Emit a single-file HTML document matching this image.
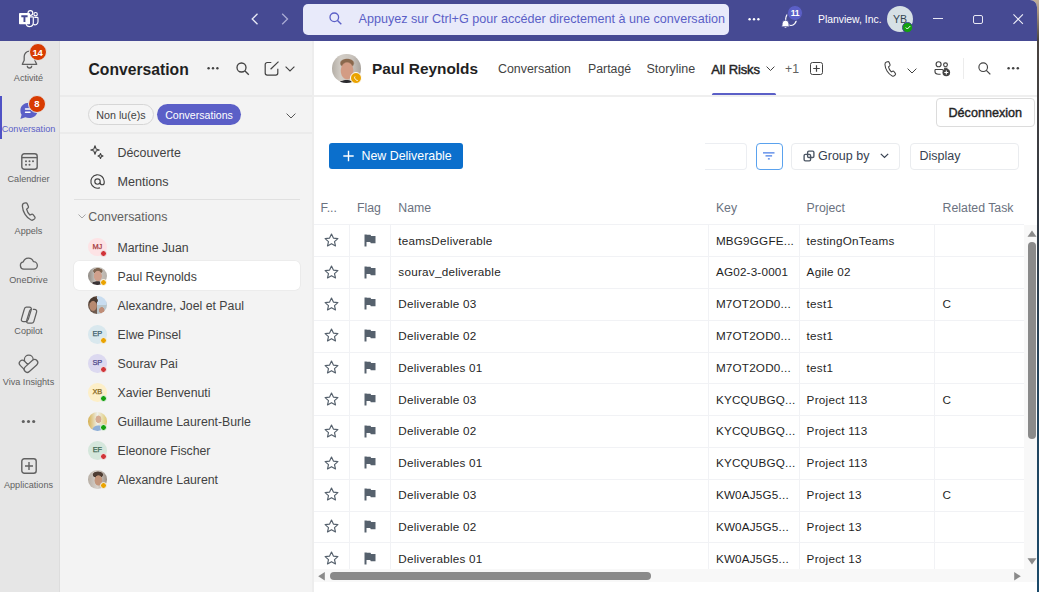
<!DOCTYPE html>
<html><head><meta charset="utf-8">
<style>
*{box-sizing:border-box;margin:0;padding:0}
html,body{width:1039px;height:592px;overflow:hidden;background:linear-gradient(#c0ae98 0,#a89480 12px,#4a4440 40px,#353a42 200px,#24445c 380px,#1b4a6a 592px);font-family:"Liberation Sans",sans-serif}
#app{position:absolute;left:0;top:0;width:1037px;height:592px;background:#fff;overflow:hidden;border-top-right-radius:7px}
.t{position:absolute;white-space:nowrap}
.b{position:absolute}
svg{position:absolute;overflow:visible}
</style></head><body>
<div id="app">

<div class="b" style="left:0;top:0;width:1037px;height:41px;background:#464a93"></div>
<div class="b" style="left:0;top:41px;width:59px;height:551px;background:#e6e6e6"></div>
<div class="b" style="left:58.5px;top:41px;width:1.2px;height:551px;background:#dddddd"></div>
<div class="b" style="left:59.7px;top:41px;width:254px;height:551px;background:#f3f3f3"></div>
<div class="b" style="left:312px;top:41px;width:2px;height:551px;background:#ededed"></div>
<svg style="left:18px;top:10px" width="22" height="18" viewBox="0 0 22 18">
<circle cx="17.6" cy="4.2" r="1.7" fill="none" stroke="#fff" stroke-width="1.1"/>
<path d="M16.3 7.4h2.9a.8.8 0 0 1 .8.8v3.6a3 3 0 0 1-4.6 2.5" fill="none" stroke="#fff" stroke-width="1.15"/>
<circle cx="12.4" cy="3" r="2.4" fill="none" stroke="#fff" stroke-width="1.15"/>
<path d="M10.5 6.9h4.2a.6.6 0 0 1 .6.6v5.4a3.7 3.7 0 0 1-7.2 1.2" fill="none" stroke="#fff" stroke-width="1.15"/>
<rect x="1" y="3.1" width="11" height="11.2" rx="0.8" fill="#fff"/>
<path d="M3.3 6.3h6.3M6.45 6.3v5.8" stroke="#464a93" stroke-width="1.9"/>
</svg>
<svg style="left:251px;top:13px" width="8" height="12" viewBox="0 0 8 12"><path d="M6.5 0.8L1.2 6l5.3 5.2" fill="none" stroke="#e8e9f5" stroke-width="1.3"/></svg>
<svg style="left:281px;top:13px" width="8" height="12" viewBox="0 0 8 12"><path d="M1.2 0.8L6.5 6l-5.3 5.2" fill="none" stroke="#a9abd4" stroke-width="1.3"/></svg>
<div class="b" style="left:303px;top:4px;width:426px;height:30.5px;background:#e8eafa;border-radius:5px"></div>
<svg style="left:329px;top:12px" width="13" height="13" viewBox="0 0 13 13"><circle cx="5.3" cy="5.3" r="4.3" fill="none" stroke="#5b5fc7" stroke-width="1.3"/><path d="M8.5 8.5l3.8 3.8" stroke="#5b5fc7" stroke-width="1.4"/></svg>
<div class="t" style="left:358.5px;top:11.30px;font-size:12.6px;line-height:16px;color:#5b5fc7;font-weight:400;letter-spacing:0px;">Appuyez sur Ctrl+G pour accéder directement à une conversation</div>
<svg style="left:747.5px;top:16.6px" width="14" height="4" viewBox="0 0 14 4"><circle cx="1.6" cy="2.2" r="1.2" fill="#fff"/><circle cx="6" cy="2.2" r="1.2" fill="#fff"/><circle cx="10.4" cy="2.2" r="1.2" fill="#fff"/></svg>
<svg style="left:780px;top:10px" width="18" height="18" viewBox="0 0 18 18">
<ellipse cx="11" cy="9.2" rx="5.4" ry="6.3" fill="none" stroke="#fff" stroke-width="1.2"/>
<path d="M1 16.8c.9-.6 1.2-1.6 1.2-3.3a3.3 3.3 0 0 1 6.6 0c0 1.7.3 2.7 1.2 3.3z" fill="#fff" stroke="#464a93" stroke-width="0.8"/>
<path d="M4.3 17.3a1.3 1.3 0 0 0 2.4 0" fill="#fff"/>
</svg>
<div class="b" style="left:787.2px;top:5.4px;width:15.6px;height:15.6px;border-radius:50%;background:#5b5fc7;border:1px solid #464a93"></div>
<div class="t" style="left:787.2px;top:7.90px;font-size:8.6px;line-height:11px;color:#fff;font-weight:700;letter-spacing:-0.3px;width:15.6px;text-align:center">11</div>
<div class="t" style="left:818px;top:12.80px;font-size:10.4px;line-height:14px;color:#fff;font-weight:400;letter-spacing:0px;">Planview, Inc.</div>
<div class="b" style="left:887px;top:6.3px;width:26px;height:26px;border-radius:50%;background:#d6e0e5"></div>
<div class="t" style="left:887px;top:12.00px;font-size:10.6px;line-height:14px;color:#33454f;font-weight:400;letter-spacing:0px;width:26px;text-align:center">YB</div>
<div class="b" style="left:902.2px;top:21.8px;width:10.8px;height:10.8px;border-radius:50%;background:#13a10e;border:1.3px solid #464a93"></div>
<svg style="left:904.8px;top:24.8px" width="6" height="5" viewBox="0 0 6 5"><path d="M0.8 2.5l1.5 1.5 3-3" fill="none" stroke="#fff" stroke-width="1"/></svg>
<div class="b" style="left:933px;top:18.2px;width:9.8px;height:1.2px;background:#e8e8f4"></div>
<div class="b" style="left:973px;top:14.7px;width:9.6px;height:9.4px;border:1.2px solid #e8e8f4;border-radius:2px"></div>
<svg style="left:1012.8px;top:14.3px" width="10.4" height="10.4" viewBox="0 0 11 11"><path d="M0.5 0.5l10 10M10.5 0.5l-10 10" stroke="#eeeef8" stroke-width="1.15"/></svg>
<div class="b" style="left:0;top:95.5px;width:2px;height:43.2px;background:#4f52c5"></div>
<svg style="left:21px;top:50px" width="17" height="19" viewBox="0 0 17 19">
<path d="M8.5 1.2a5.3 5.3 0 0 0-5.3 5.3v3.8L1.3 14.3h14.4l-1.9-4V6.5A5.3 5.3 0 0 0 8.5 1.2z" fill="none" stroke="#616161" stroke-width="1.3" stroke-linejoin="round"/>
<path d="M6.3 15.8a2.2 2.2 0 0 0 4.4 0" fill="none" stroke="#616161" stroke-width="1.3"/>
</svg>
<div class="b" style="left:29.1px;top:43.4px;width:18px;height:18px;border-radius:50%;background:#d83b01;border:1px solid #e6e6e6"></div>
<div class="t" style="left:29.1px;top:46.60px;font-size:9.5px;line-height:12px;color:#fff;font-weight:700;letter-spacing:-0.2px;width:17px;text-align:center">14</div>
<div class="t" style="left:0px;top:71.60px;font-size:9.1px;line-height:12px;color:#616161;font-weight:400;letter-spacing:0px;width:57px;text-align:center">Activité</div>
<svg style="left:19px;top:102px" width="20" height="18" viewBox="0 0 20 18">
<path d="M10 0.8c5 0 8.6 3.3 8.6 7.6S15 16 10 16c-1.3 0-2.6-.2-3.7-.7L1.4 17l1.2-4.3A7.3 7.3 0 0 1 1.4 8.4C1.4 4.1 5 0.8 10 0.8z" fill="#5b5fc7"/>
<path d="M6.5 7h7M6.5 10.2h4.5" stroke="#fff" stroke-width="1.4" stroke-linecap="round"/>
</svg>
<div class="b" style="left:28.3px;top:95px;width:18px;height:18px;border-radius:50%;background:#d83b01;border:1px solid #e6e6e6"></div>
<div class="t" style="left:28.3px;top:98.20px;font-size:9.5px;line-height:12px;color:#fff;font-weight:700;letter-spacing:0px;width:17px;text-align:center">8</div>
<div class="t" style="left:0px;top:123.10px;font-size:9.1px;line-height:12px;color:#5b5fc7;font-weight:400;letter-spacing:0px;width:57px;text-align:center">Conversation</div>
<svg style="left:20.5px;top:152.5px" width="17" height="17" viewBox="0 0 17 17">
<rect x="0.8" y="0.8" width="15.4" height="15.4" rx="2.5" fill="none" stroke="#616161" stroke-width="1.4"/>
<path d="M0.8 4.6h15.4" stroke="#616161" stroke-width="1.4"/>
<g fill="#616161"><circle cx="5" cy="8.3" r="1"/><circle cx="8.5" cy="8.3" r="1"/><circle cx="12" cy="8.3" r="1"/><circle cx="5" cy="11.8" r="1"/><circle cx="8.5" cy="11.8" r="1"/></g>
</svg>
<div class="t" style="left:0px;top:173.30px;font-size:9.1px;line-height:12px;color:#616161;font-weight:400;letter-spacing:0px;width:57px;text-align:center">Calendrier</div>
<svg style="left:20.8px;top:202px" width="15" height="18" viewBox="0 0 15 18">
<path d="M3.2 1.2l1.6-.3c.6-.1 1.1.2 1.4.8l1.2 2.7c.2.6.1 1.2-.4 1.6L5.6 7.2c.5 2.3 1.6 4.2 3.3 5.8l1.6-.7c.6-.2 1.2-.1 1.6.4l1.7 2.2c.4.5.3 1.2-.1 1.7l-1 1c-.7.6-1.7.8-2.6.4C5.3 15.7 1.7 9.8 1.4 4.3c-.1-1.4.6-2.8 1.8-3.1z" fill="none" stroke="#616161" stroke-width="1.3"/>
</svg>
<div class="t" style="left:0px;top:224.50px;font-size:9.1px;line-height:12px;color:#616161;font-weight:400;letter-spacing:0px;width:57px;text-align:center">Appels</div>
<svg style="left:19px;top:256.5px" width="19" height="13" viewBox="0 0 19 13">
<path d="M4.8 12.2A3.7 3.7 0 0 1 4.3 4.9 5.3 5.3 0 0 1 14.4 4.6a3.8 3.8 0 0 1 .3 7.6z" fill="none" stroke="#616161" stroke-width="1.3" stroke-linejoin="round"/>
</svg>
<div class="t" style="left:0px;top:273.80px;font-size:9.1px;line-height:12px;color:#616161;font-weight:400;letter-spacing:0px;width:57px;text-align:center">OneDrive</div>
<svg style="left:19.5px;top:305.5px" width="18" height="17" viewBox="0 0 18 17">
<path d="M6.2 1.2h3.3c1.3 0 2.2 1.2 1.8 2.4l-3 9.8c-.4 1.3-1.6 2.3-3 2.3H3.4c-1.4 0-2.4-1.3-2-2.6l2.8-9.6c.3-1.3 1-2.3 2-2.3z" fill="none" stroke="#616161" stroke-width="1.25"/>
<path d="M12.8 3.4h1.8c1.4 0 2.4 1.3 2 2.6l-2.8 9.6c-.3 1-1.1 1.6-2.1 1.6H8.4c-1.3 0-2.2-1.2-1.8-2.4l3-9.8c.4-1.3 1-1.6 2-1.6" fill="none" stroke="#616161" stroke-width="1.25"/>
</svg>
<div class="t" style="left:0px;top:324.70px;font-size:9.1px;line-height:12px;color:#616161;font-weight:400;letter-spacing:0px;width:57px;text-align:center">Copilot</div>
<svg style="left:19px;top:355.4px" width="19" height="19" viewBox="0 0 19 19">
<circle cx="9.8" cy="4.6" r="4.4" fill="#e6e6e6" stroke="#616161" stroke-width="1.25"/>
<rect x="-0.675" y="7.65" width="12.65" height="6" rx="3" fill="#e6e6e6" stroke="#616161" stroke-width="1.25" transform="rotate(45 5.65 10.65)"/>
<rect x="3.93" y="7.8" width="16.04" height="6.2" rx="3.1" fill="#e6e6e6" stroke="#616161" stroke-width="1.25" transform="rotate(-42 11.95 10.9)"/>
</svg>
<div class="t" style="left:0px;top:375.50px;font-size:9.1px;line-height:12px;color:#616161;font-weight:400;letter-spacing:0px;width:57px;text-align:center">Viva Insights</div>
<svg style="left:21px;top:419px" width="16" height="5" viewBox="0 0 16 5"><circle cx="2.3" cy="2.5" r="1.55" fill="#616161"/><circle cx="7.5" cy="2.5" r="1.55" fill="#616161"/><circle cx="12.7" cy="2.5" r="1.55" fill="#616161"/></svg>
<svg style="left:20.5px;top:457.5px" width="16" height="16" viewBox="0 0 16 16">
<rect x="0.8" y="0.8" width="14.4" height="14.4" rx="2.5" fill="none" stroke="#616161" stroke-width="1.4"/>
<path d="M8 4v8M4 8h8" stroke="#616161" stroke-width="1.4"/>
</svg>
<div class="t" style="left:0px;top:478.80px;font-size:9.1px;line-height:12px;color:#616161;font-weight:400;letter-spacing:0px;width:57px;text-align:center">Applications</div>
<div class="t" style="left:88.5px;top:59.60px;font-size:15.7px;line-height:20px;color:#1f1f1f;font-weight:700;letter-spacing:0px;">Conversation</div>
<svg style="left:207px;top:66px" width="14" height="4" viewBox="0 0 14 4"><circle cx="1.6" cy="2.2" r="1.2" fill="#424242"/><circle cx="6" cy="2.2" r="1.2" fill="#424242"/><circle cx="10.4" cy="2.2" r="1.2" fill="#424242"/></svg>
<svg style="left:236px;top:62px" width="14" height="13" viewBox="0 0 14 13"><circle cx="5.5" cy="5.5" r="4.5" fill="none" stroke="#424242" stroke-width="1.3"/><path d="M8.8 8.8l4 4" stroke="#424242" stroke-width="1.3"/></svg>
<svg style="left:263.5px;top:60.5px" width="15" height="15" viewBox="0 0 15 15"><path d="M7.3 1.5H3.2a2 2 0 0 0-2 2v8.6a2 2 0 0 0 2 2h8.6a2 2 0 0 0 2-2V7.8" fill="none" stroke="#424242" stroke-width="1.2"/><path d="M6.6 8.3L14.5 0.6" stroke="#424242" stroke-width="1.2"/></svg>
<svg style="left:285px;top:66px" width="10" height="6" viewBox="0 0 10 6"><path d="M0.6 0.6L5 5l4.4-4.4" fill="none" stroke="#424242" stroke-width="1.1"/></svg>
<div class="b" style="left:59.7px;top:95px;width:252.3px;height:2px;background:#ebebeb"></div>
<div class="b" style="left:88px;top:103.7px;width:66px;height:21.5px;border-radius:11px;border:1px solid #d6d6d6;background:#f5f5f5"></div>
<div class="t" style="left:88px;top:107.80px;font-size:10.7px;line-height:14px;color:#424242;font-weight:400;letter-spacing:0px;width:66px;text-align:center">Non lu(e)s</div>
<div class="b" style="left:157px;top:103.7px;width:84px;height:21.5px;border-radius:11px;background:#5b5fc7"></div>
<div class="t" style="left:157px;top:107.80px;font-size:10.6px;line-height:14px;color:#fff;font-weight:400;letter-spacing:0px;width:84px;text-align:center">Conversations</div>
<svg style="left:285.5px;top:112.8px" width="10" height="6" viewBox="0 0 10 6"><path d="M0.6 0.6L5 5l4.4-4.4" fill="none" stroke="#555" stroke-width="1"/></svg>
<div class="b" style="left:59.7px;top:132px;width:252.3px;height:2px;background:#ebebeb"></div>
<svg style="left:90px;top:145px" width="14" height="14" viewBox="0 0 14 14">
<path d="M5 0.8l1.1 3.1 3.1 1.1-3.1 1.1L5 9.2 3.9 6.1 0.8 5l3.1-1.1z" fill="none" stroke="#424242" stroke-width="1.1" stroke-linejoin="round"/>
<path d="M10.5 8.5l.8 1.7 1.7.8-1.7.8-.8 1.7-.8-1.7-1.7-.8 1.7-.8z" fill="none" stroke="#424242" stroke-width="1.1" stroke-linejoin="round"/>
</svg>
<div class="t" style="left:117.5px;top:145.30px;font-size:12.4px;line-height:16px;color:#424242;font-weight:400;letter-spacing:0px;">Découverte</div>
<svg style="left:89.5px;top:174px" width="15" height="15" viewBox="0 0 15 15">
<path d="M10.2 7.5a2.7 2.7 0 1 1-5.4 0 2.7 2.7 0 0 1 5.4 0zm0 0v1.2a2 2 0 0 0 4 0V7.5A6.7 6.7 0 1 0 10 13.7" fill="none" stroke="#424242" stroke-width="1.15"/>
</svg>
<div class="t" style="left:117.5px;top:174.00px;font-size:12.6px;line-height:16px;color:#424242;font-weight:400;letter-spacing:0px;">Mentions</div>
<div class="b" style="left:74px;top:198.5px;width:226px;height:1px;background:#e0e0e0"></div>
<svg style="left:77.5px;top:214px" width="8" height="5" viewBox="0 0 8 5"><path d="M0.5 0.5L4 4l3.5-3.5" fill="none" stroke="#9e9e9e" stroke-width="0.9"/></svg>
<div class="t" style="left:88.2px;top:208.80px;font-size:12.4px;line-height:16px;color:#616161;font-weight:400;letter-spacing:0px;">Conversations</div>
<div class="b" style="left:73.8px;top:260.7px;width:226.5px;height:29.5px;background:#fff;border-radius:5px;box-shadow:0 0 0 0.6px #e6e6e6"></div>
<div class="b" style="left:88.0px;top:237.89999999999998px;width:18.6px;height:18.6px;border-radius:50%;background:#fde3e5"></div>
<div class="t" style="left:88.0px;top:241.60px;font-size:7.4px;line-height:10px;color:#a63a3e;font-weight:400;letter-spacing:-0.2px;width:18.6px;text-align:center;-webkit-text-stroke:0.25px #a63a3e">MJ</div>
<div class="b" style="left:100.0px;top:249.5px;width:7.4px;height:7.4px;border-radius:50%;background:#d13438;border:1px solid #f3f3f3"></div>
<div class="t" style="left:117.5px;top:239.50px;font-size:12.3px;line-height:16px;color:#424242;font-weight:400;letter-spacing:0px;">Martine Juan</div>
<div class="b" style="left:88.0px;top:266.9px;width:18.6px;height:18.6px;border-radius:50%;overflow:hidden;background:radial-gradient(ellipse 4.2px 5.6px at 52% 50%, #d0a08c 0 85%, transparent 100%), radial-gradient(ellipse 5px 3px at 52% 22%, #7d6450 0 85%, transparent 100%), radial-gradient(ellipse 7px 4px at 50% 100%, #3a3436 0 85%, transparent 100%), linear-gradient(90deg,#8f8a84,#cfcac4 45%,#b8b2ab)"></div>
<div class="b" style="left:100.0px;top:278.5px;width:7.4px;height:7.4px;border-radius:50%;background:#eaa300;border:1px solid #fff"></div>
<div class="t" style="left:117.5px;top:268.50px;font-size:12.3px;line-height:16px;color:#424242;font-weight:400;letter-spacing:0px;">Paul Reynolds</div>
<div class="b" style="left:88.0px;top:295.9px;width:18.6px;height:18.6px;border-radius:50%;overflow:hidden;background:radial-gradient(ellipse 4px 5.5px at 27% 55%, #b88a70 0 80%, transparent 100%), radial-gradient(ellipse 5px 4px at 27% 25%, #4a3a30 0 85%, transparent 100%), linear-gradient(#c9ddf0 0 50%, transparent 50%) right top/50% 100% no-repeat, radial-gradient(ellipse 3px 3.5px at 50% 60%, #c08e78 0 85%, transparent 100%) right bottom/50% 50% no-repeat, linear-gradient(90deg,#6e5a4e 0 50%, #b9c6cc 50% 100%)"></div>
<div class="t" style="left:117.5px;top:297.50px;font-size:12.3px;line-height:16px;color:#424242;font-weight:400;letter-spacing:0px;">Alexandre, Joel et Paul</div>
<div class="b" style="left:88.0px;top:325.09999999999997px;width:18.6px;height:18.6px;border-radius:50%;background:#d9e8ee"></div>
<div class="t" style="left:88.0px;top:328.80px;font-size:7.4px;line-height:10px;color:#3e5f6c;font-weight:400;letter-spacing:-0.2px;width:18.6px;text-align:center;-webkit-text-stroke:0.25px #3e5f6c">EP</div>
<div class="b" style="left:100.0px;top:336.7px;width:7.4px;height:7.4px;border-radius:50%;background:#eaa300;border:1px solid #f3f3f3"></div>
<div class="t" style="left:117.5px;top:326.70px;font-size:12.3px;line-height:16px;color:#424242;font-weight:400;letter-spacing:0px;">Elwe Pinsel</div>
<div class="b" style="left:88.0px;top:354.09999999999997px;width:18.6px;height:18.6px;border-radius:50%;background:#dcd9f0"></div>
<div class="t" style="left:88.0px;top:357.80px;font-size:7.4px;line-height:10px;color:#4d4888;font-weight:400;letter-spacing:-0.2px;width:18.6px;text-align:center;-webkit-text-stroke:0.25px #4d4888">SP</div>
<div class="b" style="left:100.0px;top:365.7px;width:7.4px;height:7.4px;border-radius:50%;background:#d13438;border:1px solid #f3f3f3"></div>
<div class="t" style="left:117.5px;top:355.70px;font-size:12.3px;line-height:16px;color:#424242;font-weight:400;letter-spacing:0px;">Sourav Pai</div>
<div class="b" style="left:88.0px;top:383.09999999999997px;width:18.6px;height:18.6px;border-radius:50%;background:#fdefc8"></div>
<div class="t" style="left:88.0px;top:386.80px;font-size:7.4px;line-height:10px;color:#86681a;font-weight:400;letter-spacing:-0.2px;width:18.6px;text-align:center;-webkit-text-stroke:0.25px #86681a">XB</div>
<div class="b" style="left:100.0px;top:394.7px;width:7.4px;height:7.4px;border-radius:50%;background:#13a10e;border:1px solid #f3f3f3"></div>
<div class="t" style="left:117.5px;top:384.70px;font-size:12.3px;line-height:16px;color:#424242;font-weight:400;letter-spacing:0px;">Xavier Benvenuti</div>
<div class="b" style="left:88.0px;top:412.09999999999997px;width:18.6px;height:18.6px;border-radius:50%;overflow:hidden;background:radial-gradient(ellipse 3.2px 4px at 55% 38%, #d6ab92 0 85%, transparent 100%), radial-gradient(ellipse 7px 6px at 55% 100%, #8fb0d8 0 85%, transparent 100%), linear-gradient(90deg,#d6b050,#eef0ea 50%,#e0c870)"></div>
<div class="b" style="left:100.0px;top:423.7px;width:7.4px;height:7.4px;border-radius:50%;background:#13a10e;border:1px solid #f3f3f3"></div>
<div class="t" style="left:117.5px;top:413.70px;font-size:12.3px;line-height:16px;color:#424242;font-weight:400;letter-spacing:0px;">Guillaume Laurent-Burle</div>
<div class="b" style="left:88.0px;top:441.09999999999997px;width:18.6px;height:18.6px;border-radius:50%;background:#d5e7dc"></div>
<div class="t" style="left:88.0px;top:444.80px;font-size:7.4px;line-height:10px;color:#3c6650;font-weight:400;letter-spacing:-0.2px;width:18.6px;text-align:center;-webkit-text-stroke:0.25px #3c6650">EF</div>
<div class="b" style="left:100.0px;top:452.7px;width:7.4px;height:7.4px;border-radius:50%;background:#d13438;border:1px solid #f3f3f3"></div>
<div class="t" style="left:117.5px;top:442.70px;font-size:12.3px;line-height:16px;color:#424242;font-weight:400;letter-spacing:0px;">Eleonore Fischer</div>
<div class="b" style="left:88.0px;top:470.09999999999997px;width:18.6px;height:18.6px;border-radius:50%;overflow:hidden;background:radial-gradient(ellipse 4.2px 5.5px at 55% 55%, #c3957a 0 85%, transparent 100%), radial-gradient(ellipse 5.5px 3.5px at 52% 25%, #4e3d33 0 85%, transparent 100%), linear-gradient(90deg,#b7aea4,#d8d2cc 50%,#9a8e84)"></div>
<div class="b" style="left:100.0px;top:481.7px;width:7.4px;height:7.4px;border-radius:50%;background:#eaa300;border:1px solid #f3f3f3"></div>
<div class="t" style="left:117.5px;top:471.70px;font-size:12.3px;line-height:16px;color:#424242;font-weight:400;letter-spacing:0px;">Alexandre Laurent</div>
<div class="b" style="left:332px;top:54.4px;width:28.5px;height:28.5px;border-radius:50%;background:radial-gradient(ellipse 6.8px 9.2px at 52% 58%, #d39c84 0 85%, transparent 100%), radial-gradient(ellipse 7.6px 5px at 52% 32%, #8a684c 0 80%, transparent 100%), radial-gradient(ellipse 8px 3px at 50% 100%, #2a2a2e 0 85%, transparent 100%), linear-gradient(90deg,#b4aea6,#d2cdc6 30%,#c9c3bc 70%,#a9a39c)"></div>
<div class="b" style="left:350.2px;top:72.1px;width:12px;height:12px;border-radius:50%;background:#eaa300;border:1.5px solid #fff"></div>
<svg style="left:354px;top:75.8px" width="5" height="5" viewBox="0 0 5 5"><path d="M1 0.5c-.6.4-.6 1.4.3 2.6.9 1.1 1.8 1.6 2.6 1.3" fill="none" stroke="#fff" stroke-width="1"/></svg>
<div class="t" style="left:372px;top:59.20px;font-size:15.4px;line-height:20px;color:#1f1f1f;font-weight:700;letter-spacing:0px;">Paul Reynolds</div>
<div class="t" style="left:498px;top:61.30px;font-size:12.4px;line-height:16px;color:#424242;font-weight:400;letter-spacing:0px;">Conversation</div>
<div class="t" style="left:588px;top:61.30px;font-size:12.3px;line-height:16px;color:#424242;font-weight:400;letter-spacing:0px;">Partagé</div>
<div class="t" style="left:646.5px;top:61.30px;font-size:12.5px;line-height:16px;color:#424242;font-weight:400;letter-spacing:0px;">Storyline</div>
<div class="t" style="left:711.3px;top:60.50px;font-size:13px;line-height:17px;color:#242424;font-weight:400;letter-spacing:-0.15px;-webkit-text-stroke:0.45px #242424">All Risks</div>
<svg style="left:765.5px;top:66px" width="9" height="6" viewBox="0 0 9 6"><path d="M0.6 0.6L4.5 4.5l3.9-3.9" fill="none" stroke="#424242" stroke-width="1"/></svg>
<div class="t" style="left:785px;top:61.30px;font-size:12.3px;line-height:16px;color:#616161;font-weight:400;letter-spacing:0px;">+1</div>
<div class="b" style="left:810px;top:62.2px;width:13.2px;height:12.8px;border:1.2px solid #424242;border-radius:2.5px"></div>
<svg style="left:812.1px;top:64.1px" width="9" height="9" viewBox="0 0 9 9"><path d="M4.5 1.2v6.6M1.2 4.5h6.6" stroke="#424242" stroke-width="1.2"/></svg>
<div class="b" style="left:711.5px;top:92.8px;width:64px;height:2.8px;background:#5b5fc7;border-radius:1.5px"></div>
<div class="b" style="left:314px;top:95px;width:723px;height:2px;background:#efefef"></div>
<svg style="left:884px;top:60.6px" width="12.2" height="15" viewBox="0 0 13 16">
<path d="M2.6 1l1.5-.3c.6-.1 1.1.2 1.3.7l1 2.4c.2.5.1 1.1-.3 1.4L4.8 6.3c.4 2.1 1.4 3.8 3 5.2l1.4-.6c.5-.2 1.1-.1 1.4.3l1.5 2c.4.5.3 1.1-.1 1.5l-.9.9c-.6.6-1.5.7-2.3.4C4.5 14 1.3 8.8 1 3.8 1 2.5 1.5 1.3 2.6 1z" fill="none" stroke="#424242" stroke-width="1.15"/>
</svg>
<svg style="left:907px;top:68px" width="10" height="6" viewBox="0 0 10 6"><path d="M0.6 0.6L5 5l4.4-4.4" fill="none" stroke="#424242" stroke-width="1"/></svg>
<svg style="left:934px;top:61px" width="17" height="16" viewBox="0 0 17 16">
<circle cx="4.6" cy="3.2" r="2.5" fill="none" stroke="#424242" stroke-width="1.15"/>
<circle cx="11.5" cy="3.8" r="1.9" fill="none" stroke="#424242" stroke-width="1.15"/>
<path d="M1 8.5h7.2c.6 0 1 .4 1 1v.3M1 8.5v2c0 1.5 1.6 2.7 3.6 2.7h2" fill="none" stroke="#424242" stroke-width="1.15"/>
<path d="M10 7.3h3.5" stroke="#424242" stroke-width="1.15"/>
<circle cx="12.3" cy="11.5" r="3.8" fill="#424242"/>
<path d="M12.3 9.5v4M10.3 11.5h4" stroke="#fff" stroke-width="1.1"/>
</svg>
<div class="b" style="left:962.7px;top:58px;width:1.2px;height:21px;background:#ececec"></div>
<svg style="left:978px;top:61.5px" width="13" height="13" viewBox="0 0 13 13"><circle cx="5.2" cy="5.2" r="4.3" fill="none" stroke="#424242" stroke-width="1.15"/><path d="M8.3 8.3l4 4" stroke="#424242" stroke-width="1.2"/></svg>
<svg style="left:1007px;top:66px" width="14" height="4" viewBox="0 0 14 4"><circle cx="1.6" cy="2.2" r="1.25" fill="#424242"/><circle cx="6.2" cy="2.2" r="1.25" fill="#424242"/><circle cx="10.8" cy="2.2" r="1.25" fill="#424242"/></svg>
<div class="b" style="left:936px;top:98px;width:98.5px;height:28.5px;border:1px solid #dcdcdc;border-radius:4px;background:#fff"></div>
<div class="t" style="left:936px;top:105.40px;font-size:12.6px;line-height:16px;color:#242424;font-weight:400;letter-spacing:0px;width:98.5px;text-align:center;-webkit-text-stroke:0.4px #242424">Déconnexion</div>
<div class="b" style="left:328.7px;top:143.2px;width:134.5px;height:25.8px;background:#0b6fcc;border-radius:3px"></div>
<svg style="left:342.5px;top:149.5px" width="11" height="12" viewBox="0 0 11 12"><path d="M5.5 0.8v10.4M0.3 6h10.4" stroke="#fff" stroke-width="1.4"/></svg>
<div class="t" style="left:361.5px;top:148.00px;font-size:12.4px;line-height:16px;color:#fff;font-weight:400;letter-spacing:0px;">New Deliverable</div>
<div class="b" style="left:705px;top:143px;width:41.5px;height:26.5px;border:1px solid #eceef2;border-left:none;border-radius:0 4px 4px 0;background:#fff"></div>
<div class="b" style="left:755.5px;top:143px;width:27.3px;height:26.7px;border:1px solid #5aa2ee;border-radius:4px;background:#fff"></div>
<svg style="left:763px;top:151px" width="12" height="9" viewBox="0 0 12 9"><path d="M0 1.9h11.5M2.5 4.9h6.6M4.9 7.9h1.9" stroke="#4a7fe6" stroke-width="1.3"/></svg>
<div class="b" style="left:791.4px;top:143px;width:109px;height:26.7px;border:1px solid #eaecef;border-radius:4px;background:#fff"></div>
<svg style="left:803px;top:150px" width="12" height="12" viewBox="0 0 12 12"><rect x="4.6" y="1.1" width="6.3" height="6.4" rx="1.3" fill="none" stroke="#4b5563" stroke-width="1.35"/><rect x="1.1" y="4.4" width="6.5" height="6.5" rx="1.3" fill="none" stroke="#4b5563" stroke-width="1.35"/></svg>
<div class="t" style="left:818px;top:148.00px;font-size:12.5px;line-height:16px;color:#374151;font-weight:400;letter-spacing:0px;">Group by</div>
<svg style="left:880px;top:153px" width="9" height="6" viewBox="0 0 9 6"><path d="M0.8 0.8L4.5 4.5l3.7-3.7" fill="none" stroke="#374151" stroke-width="1.2"/></svg>
<div class="b" style="left:910px;top:143px;width:108.5px;height:26.7px;border:1px solid #eaecef;border-radius:4px;background:#fff"></div>
<div class="t" style="left:919.5px;top:148.00px;font-size:12.5px;line-height:16px;color:#374151;font-weight:400;letter-spacing:0px;">Display</div>
<div class="t" style="left:320.5px;top:200.00px;font-size:12.3px;line-height:16px;color:#6b7280;font-weight:400;letter-spacing:0px;">F...</div>
<div class="t" style="left:357px;top:200.00px;font-size:12.3px;line-height:16px;color:#6b7280;font-weight:400;letter-spacing:0px;">Flag</div>
<div class="t" style="left:398.3px;top:200.00px;font-size:12.3px;line-height:16px;color:#6b7280;font-weight:400;letter-spacing:0px;">Name</div>
<div class="t" style="left:715.9px;top:200.00px;font-size:12.3px;line-height:16px;color:#6b7280;font-weight:400;letter-spacing:0px;">Key</div>
<div class="t" style="left:806.6px;top:200.00px;font-size:12.3px;line-height:16px;color:#6b7280;font-weight:400;letter-spacing:0px;">Project</div>
<div class="t" style="left:942.6px;top:200.00px;font-size:12.3px;line-height:16px;color:#6b7280;font-weight:400;letter-spacing:0px;">Related Task</div>
<div class="b" style="left:314px;top:224px;width:710px;height:1px;background:#f1f2f5"></div>
<div class="b" style="left:349px;top:225px;width:1px;height:344px;background:#f1f2f5"></div>
<div class="b" style="left:390.3px;top:225px;width:1px;height:344px;background:#f1f2f5"></div>
<div class="b" style="left:708.1px;top:225px;width:1px;height:344px;background:#f1f2f5"></div>
<div class="b" style="left:799px;top:225px;width:1px;height:344px;background:#f1f2f5"></div>
<div class="b" style="left:934px;top:225px;width:1px;height:344px;background:#f1f2f5"></div>
<svg style="left:323.8px;top:233.00px" width="15" height="14" viewBox="0 0 15 14"><path d="M7.5 1l1.9 4.1 4.5.5-3.4 3 1 4.4-4-2.3-4 2.3 1-4.4-3.4-3 4.5-.5z" fill="none" stroke="#56616d" stroke-width="1.15" stroke-linejoin="round"/></svg>
<svg style="left:364px;top:233.70px" width="12" height="13" viewBox="0 0 12 13"><path d="M0.5 0.5h2v12h-2z" fill="#56616d"/><path d="M2 0.8h4.5l.6 1.2h4.4v7.3H6.8l-.6-1.3H2z" fill="#56616d"/></svg>
<div class="t" style="left:398.3px;top:232.50px;font-size:11.7px;line-height:15px;color:#1f1f1f;font-weight:400;letter-spacing:0.25px;">teamsDeliverable</div>
<div class="t" style="left:715.9px;top:232.50px;font-size:11.7px;line-height:15px;color:#1f1f1f;font-weight:400;letter-spacing:0.2px;">MBG9GGFE...</div>
<div class="t" style="left:806.6px;top:232.50px;font-size:11.7px;line-height:15px;color:#1f1f1f;font-weight:400;letter-spacing:0.25px;">testingOnTeams</div>
<div class="b" style="left:314px;top:256.20px;width:710px;height:1px;background:#f1f2f5"></div>
<svg style="left:323.8px;top:264.80px" width="15" height="14" viewBox="0 0 15 14"><path d="M7.5 1l1.9 4.1 4.5.5-3.4 3 1 4.4-4-2.3-4 2.3 1-4.4-3.4-3 4.5-.5z" fill="none" stroke="#56616d" stroke-width="1.15" stroke-linejoin="round"/></svg>
<svg style="left:364px;top:265.50px" width="12" height="13" viewBox="0 0 12 13"><path d="M0.5 0.5h2v12h-2z" fill="#56616d"/><path d="M2 0.8h4.5l.6 1.2h4.4v7.3H6.8l-.6-1.3H2z" fill="#56616d"/></svg>
<div class="t" style="left:398.3px;top:264.30px;font-size:11.7px;line-height:15px;color:#1f1f1f;font-weight:400;letter-spacing:0.25px;">sourav_deliverable</div>
<div class="t" style="left:715.9px;top:264.30px;font-size:11.7px;line-height:15px;color:#1f1f1f;font-weight:400;letter-spacing:0.2px;">AG02-3-0001</div>
<div class="t" style="left:806.6px;top:264.30px;font-size:11.7px;line-height:15px;color:#1f1f1f;font-weight:400;letter-spacing:0.25px;">Agile 02</div>
<div class="b" style="left:314px;top:288.00px;width:710px;height:1px;background:#f1f2f5"></div>
<svg style="left:323.8px;top:296.60px" width="15" height="14" viewBox="0 0 15 14"><path d="M7.5 1l1.9 4.1 4.5.5-3.4 3 1 4.4-4-2.3-4 2.3 1-4.4-3.4-3 4.5-.5z" fill="none" stroke="#56616d" stroke-width="1.15" stroke-linejoin="round"/></svg>
<svg style="left:364px;top:297.30px" width="12" height="13" viewBox="0 0 12 13"><path d="M0.5 0.5h2v12h-2z" fill="#56616d"/><path d="M2 0.8h4.5l.6 1.2h4.4v7.3H6.8l-.6-1.3H2z" fill="#56616d"/></svg>
<div class="t" style="left:398.3px;top:296.10px;font-size:11.7px;line-height:15px;color:#1f1f1f;font-weight:400;letter-spacing:0.25px;">Deliverable 03</div>
<div class="t" style="left:715.9px;top:296.10px;font-size:11.7px;line-height:15px;color:#1f1f1f;font-weight:400;letter-spacing:0.2px;">M7OT2OD0...</div>
<div class="t" style="left:806.6px;top:296.10px;font-size:11.7px;line-height:15px;color:#1f1f1f;font-weight:400;letter-spacing:0.25px;">test1</div>
<div class="t" style="left:942.6px;top:296.10px;font-size:11.7px;line-height:15px;color:#1f1f1f;font-weight:400;letter-spacing:0.25px;">C</div>
<div class="b" style="left:314px;top:319.80px;width:710px;height:1px;background:#f1f2f5"></div>
<svg style="left:323.8px;top:328.40px" width="15" height="14" viewBox="0 0 15 14"><path d="M7.5 1l1.9 4.1 4.5.5-3.4 3 1 4.4-4-2.3-4 2.3 1-4.4-3.4-3 4.5-.5z" fill="none" stroke="#56616d" stroke-width="1.15" stroke-linejoin="round"/></svg>
<svg style="left:364px;top:329.10px" width="12" height="13" viewBox="0 0 12 13"><path d="M0.5 0.5h2v12h-2z" fill="#56616d"/><path d="M2 0.8h4.5l.6 1.2h4.4v7.3H6.8l-.6-1.3H2z" fill="#56616d"/></svg>
<div class="t" style="left:398.3px;top:327.90px;font-size:11.7px;line-height:15px;color:#1f1f1f;font-weight:400;letter-spacing:0.25px;">Deliverable 02</div>
<div class="t" style="left:715.9px;top:327.90px;font-size:11.7px;line-height:15px;color:#1f1f1f;font-weight:400;letter-spacing:0.2px;">M7OT2OD0...</div>
<div class="t" style="left:806.6px;top:327.90px;font-size:11.7px;line-height:15px;color:#1f1f1f;font-weight:400;letter-spacing:0.25px;">test1</div>
<div class="b" style="left:314px;top:351.60px;width:710px;height:1px;background:#f1f2f5"></div>
<svg style="left:323.8px;top:360.20px" width="15" height="14" viewBox="0 0 15 14"><path d="M7.5 1l1.9 4.1 4.5.5-3.4 3 1 4.4-4-2.3-4 2.3 1-4.4-3.4-3 4.5-.5z" fill="none" stroke="#56616d" stroke-width="1.15" stroke-linejoin="round"/></svg>
<svg style="left:364px;top:360.90px" width="12" height="13" viewBox="0 0 12 13"><path d="M0.5 0.5h2v12h-2z" fill="#56616d"/><path d="M2 0.8h4.5l.6 1.2h4.4v7.3H6.8l-.6-1.3H2z" fill="#56616d"/></svg>
<div class="t" style="left:398.3px;top:359.70px;font-size:11.7px;line-height:15px;color:#1f1f1f;font-weight:400;letter-spacing:0.25px;">Deliverables 01</div>
<div class="t" style="left:715.9px;top:359.70px;font-size:11.7px;line-height:15px;color:#1f1f1f;font-weight:400;letter-spacing:0.2px;">M7OT2OD0...</div>
<div class="t" style="left:806.6px;top:359.70px;font-size:11.7px;line-height:15px;color:#1f1f1f;font-weight:400;letter-spacing:0.25px;">test1</div>
<div class="b" style="left:314px;top:383.40px;width:710px;height:1px;background:#f1f2f5"></div>
<svg style="left:323.8px;top:392.00px" width="15" height="14" viewBox="0 0 15 14"><path d="M7.5 1l1.9 4.1 4.5.5-3.4 3 1 4.4-4-2.3-4 2.3 1-4.4-3.4-3 4.5-.5z" fill="none" stroke="#56616d" stroke-width="1.15" stroke-linejoin="round"/></svg>
<svg style="left:364px;top:392.70px" width="12" height="13" viewBox="0 0 12 13"><path d="M0.5 0.5h2v12h-2z" fill="#56616d"/><path d="M2 0.8h4.5l.6 1.2h4.4v7.3H6.8l-.6-1.3H2z" fill="#56616d"/></svg>
<div class="t" style="left:398.3px;top:391.50px;font-size:11.7px;line-height:15px;color:#1f1f1f;font-weight:400;letter-spacing:0.25px;">Deliverable 03</div>
<div class="t" style="left:715.9px;top:391.50px;font-size:11.7px;line-height:15px;color:#1f1f1f;font-weight:400;letter-spacing:0.2px;">KYCQUBGQ...</div>
<div class="t" style="left:806.6px;top:391.50px;font-size:11.7px;line-height:15px;color:#1f1f1f;font-weight:400;letter-spacing:0.25px;">Project 113</div>
<div class="t" style="left:942.6px;top:391.50px;font-size:11.7px;line-height:15px;color:#1f1f1f;font-weight:400;letter-spacing:0.25px;">C</div>
<div class="b" style="left:314px;top:415.20px;width:710px;height:1px;background:#f1f2f5"></div>
<svg style="left:323.8px;top:423.80px" width="15" height="14" viewBox="0 0 15 14"><path d="M7.5 1l1.9 4.1 4.5.5-3.4 3 1 4.4-4-2.3-4 2.3 1-4.4-3.4-3 4.5-.5z" fill="none" stroke="#56616d" stroke-width="1.15" stroke-linejoin="round"/></svg>
<svg style="left:364px;top:424.50px" width="12" height="13" viewBox="0 0 12 13"><path d="M0.5 0.5h2v12h-2z" fill="#56616d"/><path d="M2 0.8h4.5l.6 1.2h4.4v7.3H6.8l-.6-1.3H2z" fill="#56616d"/></svg>
<div class="t" style="left:398.3px;top:423.30px;font-size:11.7px;line-height:15px;color:#1f1f1f;font-weight:400;letter-spacing:0.25px;">Deliverable 02</div>
<div class="t" style="left:715.9px;top:423.30px;font-size:11.7px;line-height:15px;color:#1f1f1f;font-weight:400;letter-spacing:0.2px;">KYCQUBGQ...</div>
<div class="t" style="left:806.6px;top:423.30px;font-size:11.7px;line-height:15px;color:#1f1f1f;font-weight:400;letter-spacing:0.25px;">Project 113</div>
<div class="b" style="left:314px;top:447.00px;width:710px;height:1px;background:#f1f2f5"></div>
<svg style="left:323.8px;top:455.60px" width="15" height="14" viewBox="0 0 15 14"><path d="M7.5 1l1.9 4.1 4.5.5-3.4 3 1 4.4-4-2.3-4 2.3 1-4.4-3.4-3 4.5-.5z" fill="none" stroke="#56616d" stroke-width="1.15" stroke-linejoin="round"/></svg>
<svg style="left:364px;top:456.30px" width="12" height="13" viewBox="0 0 12 13"><path d="M0.5 0.5h2v12h-2z" fill="#56616d"/><path d="M2 0.8h4.5l.6 1.2h4.4v7.3H6.8l-.6-1.3H2z" fill="#56616d"/></svg>
<div class="t" style="left:398.3px;top:455.10px;font-size:11.7px;line-height:15px;color:#1f1f1f;font-weight:400;letter-spacing:0.25px;">Deliverables 01</div>
<div class="t" style="left:715.9px;top:455.10px;font-size:11.7px;line-height:15px;color:#1f1f1f;font-weight:400;letter-spacing:0.2px;">KYCQUBGQ...</div>
<div class="t" style="left:806.6px;top:455.10px;font-size:11.7px;line-height:15px;color:#1f1f1f;font-weight:400;letter-spacing:0.25px;">Project 113</div>
<div class="b" style="left:314px;top:478.80px;width:710px;height:1px;background:#f1f2f5"></div>
<svg style="left:323.8px;top:487.40px" width="15" height="14" viewBox="0 0 15 14"><path d="M7.5 1l1.9 4.1 4.5.5-3.4 3 1 4.4-4-2.3-4 2.3 1-4.4-3.4-3 4.5-.5z" fill="none" stroke="#56616d" stroke-width="1.15" stroke-linejoin="round"/></svg>
<svg style="left:364px;top:488.10px" width="12" height="13" viewBox="0 0 12 13"><path d="M0.5 0.5h2v12h-2z" fill="#56616d"/><path d="M2 0.8h4.5l.6 1.2h4.4v7.3H6.8l-.6-1.3H2z" fill="#56616d"/></svg>
<div class="t" style="left:398.3px;top:486.90px;font-size:11.7px;line-height:15px;color:#1f1f1f;font-weight:400;letter-spacing:0.25px;">Deliverable 03</div>
<div class="t" style="left:715.9px;top:486.90px;font-size:11.7px;line-height:15px;color:#1f1f1f;font-weight:400;letter-spacing:0.2px;">KW0AJ5G5...</div>
<div class="t" style="left:806.6px;top:486.90px;font-size:11.7px;line-height:15px;color:#1f1f1f;font-weight:400;letter-spacing:0.25px;">Project 13</div>
<div class="t" style="left:942.6px;top:486.90px;font-size:11.7px;line-height:15px;color:#1f1f1f;font-weight:400;letter-spacing:0.25px;">C</div>
<div class="b" style="left:314px;top:510.60px;width:710px;height:1px;background:#f1f2f5"></div>
<svg style="left:323.8px;top:519.20px" width="15" height="14" viewBox="0 0 15 14"><path d="M7.5 1l1.9 4.1 4.5.5-3.4 3 1 4.4-4-2.3-4 2.3 1-4.4-3.4-3 4.5-.5z" fill="none" stroke="#56616d" stroke-width="1.15" stroke-linejoin="round"/></svg>
<svg style="left:364px;top:519.90px" width="12" height="13" viewBox="0 0 12 13"><path d="M0.5 0.5h2v12h-2z" fill="#56616d"/><path d="M2 0.8h4.5l.6 1.2h4.4v7.3H6.8l-.6-1.3H2z" fill="#56616d"/></svg>
<div class="t" style="left:398.3px;top:518.70px;font-size:11.7px;line-height:15px;color:#1f1f1f;font-weight:400;letter-spacing:0.25px;">Deliverable 02</div>
<div class="t" style="left:715.9px;top:518.70px;font-size:11.7px;line-height:15px;color:#1f1f1f;font-weight:400;letter-spacing:0.2px;">KW0AJ5G5...</div>
<div class="t" style="left:806.6px;top:518.70px;font-size:11.7px;line-height:15px;color:#1f1f1f;font-weight:400;letter-spacing:0.25px;">Project 13</div>
<div class="b" style="left:314px;top:542.40px;width:710px;height:1px;background:#f1f2f5"></div>
<svg style="left:323.8px;top:551.00px" width="15" height="14" viewBox="0 0 15 14"><path d="M7.5 1l1.9 4.1 4.5.5-3.4 3 1 4.4-4-2.3-4 2.3 1-4.4-3.4-3 4.5-.5z" fill="none" stroke="#56616d" stroke-width="1.15" stroke-linejoin="round"/></svg>
<svg style="left:364px;top:551.70px" width="12" height="13" viewBox="0 0 12 13"><path d="M0.5 0.5h2v12h-2z" fill="#56616d"/><path d="M2 0.8h4.5l.6 1.2h4.4v7.3H6.8l-.6-1.3H2z" fill="#56616d"/></svg>
<div class="t" style="left:398.3px;top:550.50px;font-size:11.7px;line-height:15px;color:#1f1f1f;font-weight:400;letter-spacing:0.25px;">Deliverables 01</div>
<div class="t" style="left:715.9px;top:550.50px;font-size:11.7px;line-height:15px;color:#1f1f1f;font-weight:400;letter-spacing:0.2px;">KW0AJ5G5...</div>
<div class="t" style="left:806.6px;top:550.50px;font-size:11.7px;line-height:15px;color:#1f1f1f;font-weight:400;letter-spacing:0.25px;">Project 13</div>
<div class="b" style="left:1024.3px;top:224.5px;width:12.7px;height:344.5px;background:#f8f8f8"></div>
<svg style="left:1026.5px;top:230px" width="10" height="7" viewBox="0 0 10 7"><path d="M5 0.5L9.5 6.8H0.5z" fill="#8a8a8a"/></svg>
<div class="b" style="left:1028.2px;top:242.3px;width:7.6px;height:197px;background:#8a8a8a;border-radius:4px"></div>
<svg style="left:1026.5px;top:558px" width="10" height="7" viewBox="0 0 10 7"><path d="M0.5 0.2H9.5L5 6.5z" fill="#8a8a8a"/></svg>
<div class="b" style="left:314px;top:569px;width:723px;height:13.4px;background:#f8f8f8"></div>
<svg style="left:317.5px;top:571.8px" width="7" height="9" viewBox="0 0 7 9"><path d="M6.8 0L6.8 8.5 0.2 4.25z" fill="#8a8a8a"/></svg>
<div class="b" style="left:330px;top:571.8px;width:320.5px;height:8px;background:#8a8a8a;border-radius:4px"></div>
<svg style="left:1013.5px;top:571.8px" width="7" height="9" viewBox="0 0 7 9"><path d="M0.2 0L0.2 8.5 6.8 4.25z" fill="#8a8a8a"/></svg>
</div></body></html>
